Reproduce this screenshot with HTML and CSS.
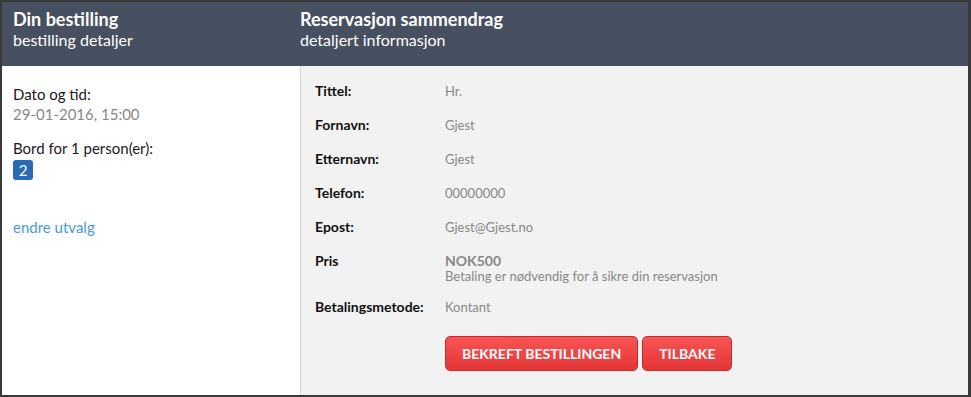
FILE: index.html
```html
<!DOCTYPE html>
<html lang="no">
<head>
    <meta charset="UTF-8">
    <meta name="viewport" content="width=device-width, initial-scale=1.0">
    <title>Reservasjon</title>
    <link rel="stylesheet" href="styles.css">
</head>
<body>
    <div class="frame">
        <div class="head">
            <div class="head-col head-left">
                <div class="head-title">Din bestilling</div>
                <div class="head-sub">bestilling detaljer</div>
            </div>
            <div class="head-col">
                <div class="head-title">Reservasjon sammendrag</div>
                <div class="head-sub">detaljert informasjon</div>
            </div>
        </div>
        <div class="content">
            <div class="side">
                <div class="side-label">Dato og tid:</div>
                <div class="side-value">29-01-2016, 15:00</div>
                <div class="side-label spaced">Bord for 1 person(er):</div>
                <span class="badge">2</span>
                <a class="change-link" href="#">endre utvalg</a>
            </div>
            <div class="summary">
                <div class="row"><div class="label">Tittel:</div><div class="value">Hr.</div></div>
                <div class="row"><div class="label">Fornavn:</div><div class="value">Gjest</div></div>
                <div class="row"><div class="label">Etternavn:</div><div class="value">Gjest</div></div>
                <div class="row"><div class="label">Telefon:</div><div class="value">00000000</div></div>
                <div class="row"><div class="label">Epost:</div><div class="value">Gjest@Gjest.no</div></div>
                <div class="row">
                    <div class="label">Pris</div>
                    <div class="value">
                        <div class="price">NOK500</div>
                        <div class="note">Betaling er nødvendig for å sikre din reservasjon</div>
                    </div>
                </div>
                <div class="row"><div class="label">Betalingsmetode:</div><div class="value">Kontant</div></div>
                <div class="actions">
                    <button class="btn">BEKREFT BESTILLINGEN</button>
                    <button class="btn">TILBAKE</button>
                </div>
            </div>
        </div>
    </div>
</body>
</html>
```

FILE: styles.css
```css
*{
    padding: 0;
    margin: 0;
    box-sizing: border-box;
}
body{
    font-family: Lato, "Open Sans", sans-serif;
    background-color: #3a3a3a;
}
.frame{
    width: 971px;
    height: 397px;
    border-top: 2px solid #3a3a3a;
    border-left: 2px solid #3a3a3a;
    border-right: 3px solid #3a3a3a;
    border-bottom: 2px solid #3a3a3a;
    display: flex;
    flex-direction: column;
    background-color: #f2f2f2;
}
.head{
    height: 64px;
    background-color: #465060;
    color: #fff;
    display: flex;
    padding-top: 6px;
}
.head-left{
    width: 298px;
    padding-left: 11px;
}
.head-title{
    font-size: 18px;
    font-weight: bold;
    line-height: 22px;
}
.head-sub{
    font-size: 16px;
    line-height: 19px;
}
.content{
    flex: 1;
    display: flex;
}
.side{
    width: 299px;
    background-color: #fff;
    border-right: 1px solid #d8d8d8;
    padding: 18px 11px 0;
    font-size: 15px;
    line-height: 20px;
    display: flex;
    flex-direction: column;
    align-items: flex-start;
}
.side-label{
    color: #1a1a1a;
}
.side-label.spaced{
    margin-top: 14px;
}
.side-value{
    color: #888;
}
.badge{
    display: inline-block;
    width: 20px;
    height: 20px;
    margin-top: 2px;
    border-radius: 3px;
    background-color: #2a69b3;
    color: #fff;
    text-align: center;
    font-size: 15px;
    line-height: 20px;
}
.change-link{
    margin-top: 37px;
    color: #4a9ad9;
    text-decoration: none;
}
.summary{
    flex: 1;
    padding: 16px 14px 0;
    font-size: 13px;
    line-height: 18px;
}
.row{
    display: flex;
    margin-bottom: 16px;
}
.label{
    width: 130px;
    font-size: 14px;
    font-weight: bold;
    color: #111;
}
.value{
    color: #888;
}
.price{
    font-size: 14px;
    font-weight: bold;
}
.note{
    line-height: 12px;
}
.actions{
    display: flex;
    gap: 4px;
    margin-left: 130px;
    margin-top: 20px;
}
.btn{
    height: 35px;
    padding: 0 16px;
    border: 1px solid #c62a2a;
    border-radius: 5px;
    background: linear-gradient(#f85454, #e53636);
    color: #fff;
    font-family: Lato, "Open Sans", sans-serif;
    font-size: 14px;
    font-weight: bold;
}
```
